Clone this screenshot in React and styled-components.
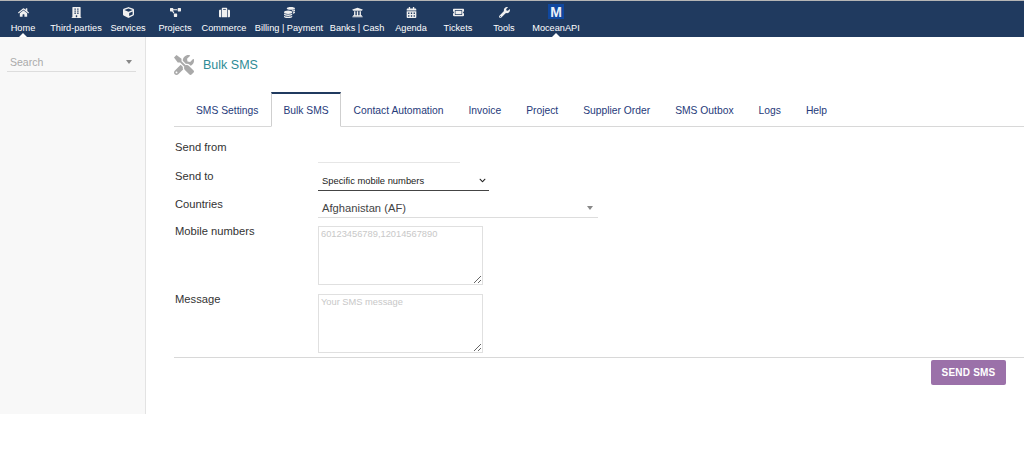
import styled, { createGlobalStyle } from "styled-components";
import {
  FaHome,
  FaBuilding,
  FaCube,
  FaProjectDiagram,
  FaSuitcase,
  FaCoins,
  FaUniversity,
  FaCalendarAlt,
  FaTicketAlt,
  FaWrench,
  FaTools,
  FaChevronDown,
} from "react-icons/fa";

const GlobalStyle = createGlobalStyle`
  body {
    margin: 0;
    background: #ffffff;
    font-family: "Liberation Sans", Arial, sans-serif;
    color: #333333;
  }
`;

const NAV_ITEMS = [
  { label: "Home", icon: <FaHome />, width: 46, active: true },
  { label: "Third-parties", icon: <FaBuilding />, width: 60 },
  { label: "Services", icon: <FaCube />, width: 44 },
  { label: "Projects", icon: <FaProjectDiagram />, width: 50 },
  { label: "Commerce", icon: <FaSuitcase />, width: 48 },
  { label: "Billing | Payment", icon: <FaCoins />, width: 82 },
  { label: "Banks | Cash", icon: <FaUniversity />, width: 54 },
  { label: "Agenda", icon: <FaCalendarAlt />, width: 54 },
  { label: "Tickets", icon: <FaTicketAlt />, width: 40 },
  { label: "Tools", icon: <FaWrench />, width: 52 },
  { label: "MoceanAPI", logo: true, width: 52, active: true },
];

const TABS = [
  { label: "SMS Settings" },
  { label: "Bulk SMS", active: true },
  { label: "Contact Automation" },
  { label: "Invoice" },
  { label: "Project" },
  { label: "Supplier Order" },
  { label: "SMS Outbox" },
  { label: "Logs" },
  { label: "Help" },
];

const TopBar = styled.nav`
  display: flex;
  height: 36px;
  background: #203a5f;
  border-top: 1px solid #b5b5b5;
`;

const NavItem = styled.a`
  position: relative;
  flex: 0 0 ${(p) => p.$width}px;
  min-width: 0;
  display: flex;
  flex-direction: column;
  align-items: center;
  padding-top: 4px;
  color: #ffffff;
  font-size: 9.2px;
  line-height: 12px;
  white-space: nowrap;

  ${(p) =>
    p.$active &&
    `
    &::after {
      content: "";
      position: absolute;
      left: 50%;
      bottom: 0;
      margin-left: -4px;
      border: 4px solid transparent;
      border-top: 0;
      border-bottom-color: #ffffff;
    }
  `}
`;

const NavIcon = styled.span`
  display: flex;
  align-items: center;
  justify-content: center;
  height: 14px;
  margin-bottom: 3px;
  font-size: 11px;
  color: #f0f0f0;
`;

const LogoBox = styled.span`
  display: flex;
  align-items: center;
  justify-content: center;
  width: 16px;
  height: 15px;
  margin-top: -1px;
  background: #0f479f;
  color: #e9eff8;
  font-size: 14px;
  font-weight: 700;
`;

const Body = styled.div`
  display: flex;
  align-items: stretch;
  height: 377px;
`;

const Sidebar = styled.aside`
  box-sizing: border-box;
  flex: 0 0 146px;
  padding: 17px 9px 0 7px;
  background: #f8f8f8;
  border-right: 1px solid #e3e3e3;
`;

const SearchBox = styled.div`
  display: flex;
  align-items: center;
  justify-content: space-between;
  height: 15px;
  padding: 0 3px 2px;
  border-bottom: 1px solid #dddddd;
  color: #aaaaaa;
  font-size: 10.5px;
`;

const Caret = styled.span`
  width: 0;
  height: 0;
  border: 3px solid transparent;
  border-top: 4px solid #888888;
  border-bottom: 0;
  margin-right: 1px;
`;

const Main = styled.main`
  flex: 1;
  min-width: 0;
  padding-left: 28px;
`;

const TitleRow = styled.div`
  display: flex;
  align-items: center;
  gap: 9px;
  height: 24px;
  margin-top: 16px;
`;

const TitleIcon = styled.span`
  display: flex;
  font-size: 20px;
  color: #a9a9a9;
`;

const Title = styled.h1`
  margin: 0;
  font-size: 12.5px;
  font-weight: 400;
  color: #2e8b96;
`;

const TabBar = styled.ul`
  display: flex;
  height: 34px;
  margin: 15px 0 0;
  padding: 0 0 0 9.5px;
  list-style: none;
  border-bottom: 1px solid #d8d8d8;
`;

const Tab = styled.li`
  box-sizing: border-box;
  height: 35px;
  padding: 10px 11.5px 0;
  font-size: 10.3px;
  line-height: 14px;
  color: #263a7a;
  white-space: nowrap;
  border: 1px solid transparent;
  border-top-width: 2px;

  ${(p) =>
    p.$active &&
    `
    background: #ffffff;
    border-color: #cfcfcf;
    border-top-color: #203a5f;
    border-bottom-color: #ffffff;
  `}
`;

const Form = styled.form`
  display: grid;
  grid-template-columns: 143px 1fr;
  grid-template-rows: 29px 28px 27px 68px 74px;
  padding-left: 1px;
  margin-top: 4px;
  border-bottom: 1px solid #d8d8d8;
`;

const Label = styled.label`
  font-size: 11.2px;
  line-height: 14px;
  padding-top: 9px;
  color: #333333;
`;

const SenderField = styled.div`
  width: 142px;
  height: 0;
  margin-top: 31px;
  border-bottom: 1px solid #e6e6e6;
`;

const SelectWrap = styled.div`
  position: relative;
  width: 171px;
  height: 20px;
  margin-top: 11px;
`;

const Select = styled.select`
  appearance: none;
  display: block;
  width: 100%;
  height: 20px;
  padding: 0 0 0 4px;
  border: 0;
  border-radius: 0;
  border-bottom: 1px solid #444444;
  background: #ffffff;
  font-family: "Liberation Sans", Arial, sans-serif;
  font-size: 9.4px;
  color: #222222;
  outline: none;
`;

const SelectArrow = styled.span`
  position: absolute;
  top: 6px;
  right: 3px;
  display: flex;
  font-size: 7px;
  color: #222222;
  pointer-events: none;
`;

const CountryBox = styled.div`
  display: flex;
  align-items: center;
  justify-content: space-between;
  box-sizing: border-box;
  width: 280px;
  height: 20px;
  margin-top: 10px;
  padding: 0 4px;
  border-bottom: 1px solid #dddddd;
  font-size: 11.2px;
  color: #444444;
`;

const TextArea = styled.textarea`
  display: block;
  box-sizing: border-box;
  width: 165px;
  height: 59px;
  margin-top: 11px;
  padding: 2px;
  border: 1px solid #e0e0e0;
  background: #ffffff;
  font-family: "Liberation Sans", Arial, sans-serif;
  font-size: 9.3px;
  outline: none;

  &::placeholder {
    color: #c8c8c8;
    opacity: 1;
  }
`;

const Actions = styled.div`
  display: flex;
  justify-content: flex-end;
  padding: 2px 18px 0 0;
`;

const SendButton = styled.button`
  width: 75px;
  height: 25px;
  padding: 0;
  border: 0;
  border-radius: 2px;
  background: #9b71a9;
  color: #ffffff;
  font-family: "Liberation Sans", Arial, sans-serif;
  font-size: 10px;
  font-weight: 700;
  letter-spacing: 0.2px;
`;

export default function App() {
  return (
    <>
      <GlobalStyle />
      <TopBar>
        {NAV_ITEMS.map((item) => (
          <NavItem key={item.label} $width={item.width} $active={item.active}>
            <NavIcon>{item.logo ? <LogoBox>M</LogoBox> : item.icon}</NavIcon>
            {item.label}
          </NavItem>
        ))}
      </TopBar>
      <Body>
        <Sidebar>
          <SearchBox>
            Search
            <Caret />
          </SearchBox>
        </Sidebar>
        <Main>
          <TitleRow>
            <TitleIcon>
              <FaTools />
            </TitleIcon>
            <Title>Bulk SMS</Title>
          </TitleRow>
          <TabBar>
            {TABS.map((tab) => (
              <Tab key={tab.label} $active={tab.active}>
                {tab.label}
              </Tab>
            ))}
          </TabBar>
          <Form>
            <Label>Send from</Label>
            <SenderField />
            <Label>Send to</Label>
            <SelectWrap>
              <Select defaultValue="specific">
                <option value="specific">Specific mobile numbers</option>
              </Select>
              <SelectArrow>
                <FaChevronDown />
              </SelectArrow>
            </SelectWrap>
            <Label>Countries</Label>
            <CountryBox>
              Afghanistan (AF)
              <Caret />
            </CountryBox>
            <Label>Mobile numbers</Label>
            <div>
              <TextArea placeholder="60123456789,12014567890" />
            </div>
            <Label>Message</Label>
            <div>
              <TextArea placeholder="Your SMS message" />
            </div>
          </Form>
          <Actions>
            <SendButton type="button">SEND SMS</SendButton>
          </Actions>
        </Main>
      </Body>
    </>
  );
}
